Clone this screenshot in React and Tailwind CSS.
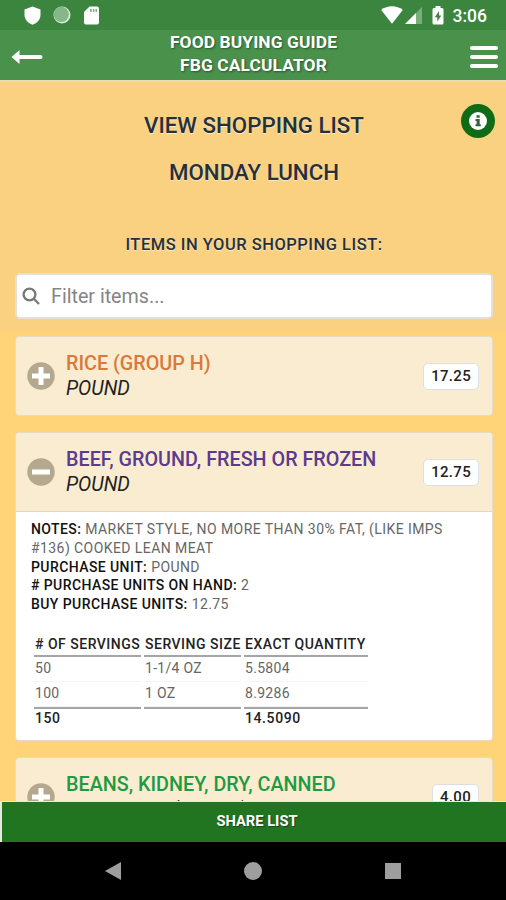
import React, { useState } from 'react';
import clsx from 'clsx';

const items = [
  { id: 'rice', name: 'RICE (GROUP H)', unit: 'POUND', qty: '17.25', color: 'text-[#d9793c]' },
  {
    id: 'beef',
    name: 'BEEF, GROUND, FRESH OR FROZEN',
    unit: 'POUND',
    qty: '12.75',
    color: 'text-[#5c3a8e]',
    notes: 'MARKET STYLE, NO MORE THAN 30% FAT, (LIKE IMPS #136) COOKED LEAN MEAT',
    onHand: '2',
    servings: [
      ['50', '1-1/4 OZ', '5.5804'],
      ['100', '1 OZ', '8.9286'],
    ],
    total: ['150', '', '14.5090'],
  },
  { id: 'beans', name: 'BEANS, KIDNEY, DRY, CANNED', unit: 'NO. 10 CAN (108 OZ)', qty: '4.00', color: 'text-[#1f9a43]' },
];

function StatusBar() {
  return (
    <div className="flex h-[30px] shrink-0 items-center bg-[#3c853e] pl-[24px] pr-[19px] text-white">
      <svg className="h-[19px] w-[17px]" viewBox="0 0 17 19" fill="currentColor">
        <path d="M8.5 0.5 L16.5 3.5 V9 C16.5 13.500 13 17.500 8.500 18.700 C4 17.500 0.500 13.500 0.500 9 V3.500 Z" />
      </svg>
      <svg className="ml-[12px] h-[18px] w-[18px]" viewBox="0 0 18 18">
        <circle cx="9" cy="9" r="8.500" fill="#d8e9d6" />
        <circle cx="8.300" cy="8.300" r="7.600" fill="#86b788" />
      </svg>
      <svg className="ml-[13px] h-[19px] w-[15px]" viewBox="0 0 15 19">
        <path d="M5.500 0.500 H13 a2 2 0 0 1 2 2 V16.500 a2 2 0 0 1 -2 2 H2 a2 2 0 0 1 -2 -2 V6 Z" fill="#fff" />
        <path d="M6 3 h1.600 v3 H6z M8.800 3 h1.600 v3 H8.800z M11.500 3 h1.600 v3 h-1.600z" fill="#7fb081" />
      </svg>
      <svg className="ml-auto h-[18px] w-[22px]" viewBox="0 0 22 18" fill="currentColor">
        <path d="M11 17.700 L0.200 4 C6 -1 16 -1 21.800 4 Z" />
      </svg>
      <svg className="ml-[2px] h-[17px] w-[17px]" viewBox="0 0 17 17">
        <path d="M17 0 V17 H0 Z" fill="#79ad7a" />
        <path d="M11 6 V17 H0 Z" fill="#fff" />
      </svg>
      <svg className="ml-[10px] h-[19px] w-[12px]" viewBox="0 0 12 19">
        <path d="M3.500 0 h5 v2 h1.500 a1.500 1.500 0 0 1 1.500 1.500 V17 a1.500 1.500 0 0 1 -1.500 1.500 H2 A1.500 1.500 0 0 1 0.500 17 V3.500 A1.500 1.500 0 0 1 2 2 h1.500z" fill="#fff" />
        <path d="M7 5 L2.800 11.300 H5.300 V15.500 L9.300 9.400 H7z" fill="#3c853e" />
      </svg>
      <span className="ml-[9px] pt-[3px] text-[17.500px] font-medium leading-none">3:06</span>
    </div>
  );
}

function Header() {
  return (
    <header className="grid h-[52px] shrink-0 grid-cols-[60px_1fr_60px] items-center border-b-2 border-[#ecd9b4] bg-[#4a914c] text-white">
      <svg className="ml-[11px] mt-[4px] h-[16px] w-[32px]" viewBox="0 0 32 16" fill="currentColor">
        <path d="M0.500 8 L8.500 1 V6 H29.500 a2 2 0 0 1 0 4 H8.500 V15 Z" />
      </svg>
      <h1 className="pb-[2px] pl-[1px] text-center text-[17.400px] font-bold leading-[23px] tracking-[0.100px] [text-shadow:1px_1px_2px_rgba(30,60,30,0.7)]">
        FOOD BUYING GUIDE
        <br />
        FBG CALCULATOR
      </h1>
      <button aria-label="Menu" className="ml-[24px] mt-[4px] flex w-[28px] flex-col gap-[4.500px]">
        <span className="h-[4.500px] rounded-[2px] bg-white" />
        <span className="h-[4.500px] rounded-[2px] bg-white" />
        <span className="h-[4.500px] rounded-[2px] bg-white" />
      </button>
    </header>
  );
}

function ToggleIcon({ open }) {
  return (
    <svg className="h-[28px] w-[28px] shrink-0" viewBox="0 0 28 28">
      <circle cx="14" cy="14" r="13.700" fill="#b4a98f" />
      <path d={open ? 'M5 11.500h18v5H5z' : 'M5 11.500h6.500V5h5v6.500H23v5h-6.500V23h-5v-6.500H5z'} fill="#fff" />
    </svg>
  );
}

function ServingsTable({ rows, total }) {
  const cell = 'pl-[1px] text-left';
  return (
    <table className="mt-[20px] w-[340px] table-fixed border-separate border-spacing-x-[3px] border-spacing-y-0">
      <colgroup>
        <col className="w-[107px]" />
        <col className="w-[97px]" />
        <col />
      </colgroup>
      <thead>
        <tr className="h-[23px] whitespace-nowrap text-[14px] font-medium text-[#222]">
          {['# OF SERVINGS', 'SERVING SIZE', 'EXACT QUANTITY'].map(h => (
            <th key={h} className={clsx(cell, 'border-b-2 border-[#a5a5a5] font-medium leading-[20px] tracking-[0.500px]')}>{h}</th>
          ))}
        </tr>
      </thead>
      <tbody>
        {rows.map((row, i) => (
          <tr key={i} className="h-[25px] text-[14px] leading-[20px] tracking-[0.300px] text-[#666]">
            {row.map((v, j) => (
              <td key={j} className={clsx(cell, 'border-b border-[#f5f5f5] pb-[1px]')}>{v}</td>
            ))}
          </tr>
        ))}
        <tr className="h-[23px] text-[14px] font-medium leading-[17px] tracking-[0.600px] text-[#222]">
          {total.map((v, j) => (
            <td key={j} className={clsx(cell, 'border-t-2 border-[#a5a5a5] pb-[2px]')}>{v}</td>
          ))}
        </tr>
      </tbody>
    </table>
  );
}

function ItemCard({ item, open, onToggle }) {
  return (
    <div className="w-[478px] shrink-0 overflow-hidden rounded-[4px] border border-[#e3dccb] bg-white">
      <div
        onClick={onToggle}
        className={clsx('flex items-center bg-[#f9ecd1] pl-[11px] pr-[13px]', open ? 'h-[79px] border-b border-[#ddd9cb]' : 'h-[78px]')}
      >
        <ToggleIcon open={open} />
        <div className="ml-[11px] text-[19.750px] leading-[25px]">
          <div className={clsx('whitespace-nowrap font-medium', item.color)}>{item.name}</div>
          <div className="italic text-[#222]">{item.unit}</div>
        </div>
        <span className="ml-auto flex h-[27px] items-center rounded-[5px] border border-[#dedede] bg-white px-[7px] text-[15px] font-medium tracking-[0.300px] text-[#222]">
          {item.qty}
        </span>
      </div>
      {open && item.servings && (
        <div className="h-[228px] px-[15px] pt-[8px] text-[14px] leading-[18.750px] tracking-[0.420px] text-[#666]">
          <p className="w-[430px]"><b className="font-medium text-[#111]">NOTES:</b> {item.notes}</p>
          <p><b className="font-medium text-[#111]">PURCHASE UNIT:</b> {item.unit}</p>
          <p><b className="font-medium text-[#111]"># PURCHASE UNITS ON HAND:</b> {item.onHand}</p>
          <p><b className="font-medium text-[#111]">BUY PURCHASE UNITS:</b> {item.qty}</p>
          <ServingsTable rows={item.servings} total={item.total} />
        </div>
      )}
    </div>
  );
}

export default function App() {
  const [openId, setOpenId] = useState('beef');
  const [filter, setFilter] = useState('');
  const shown = items.filter(i => i.name.includes(filter.toUpperCase()));

  return (
    <div className="flex h-[900px] w-[506px] flex-col overflow-hidden bg-black font-['Roboto',sans-serif]">
      <StatusBar />
      <Header />
      <main className="flex min-h-0 flex-1 flex-col overflow-hidden bg-[#ffd378]">
        <section className="relative h-[249px] shrink-0 bg-[#fad181] px-[15px] text-center text-[#25303a]">
          <h2 className="pl-[2px] pt-[30px] text-[22.300px] font-medium leading-[26px] [text-shadow:0_1px_1px_rgba(255,255,255,0.6)]">VIEW SHOPPING LIST</h2>
          <h2 className="pl-[2px] pt-[21px] text-[22.300px] font-medium leading-[26px] [text-shadow:0_1px_1px_rgba(255,255,255,0.6)]">MONDAY LUNCH</h2>
          <h3 className="pl-[2px] pt-[50px] text-[16.500px] font-medium leading-[20px] tracking-[0.500px] [text-shadow:0_1px_1px_rgba(255,255,255,0.6)]">ITEMS IN YOUR SHOPPING LIST:</h3>
          <label className="mt-[18px] flex h-[46px] w-[478px] items-center rounded-[5px] border-2 border-[#e4e0d8] bg-white pl-[5px]">
            <svg className="h-[18px] w-[18px]" viewBox="0 0 18 18" fill="none" stroke="#777" strokeWidth="2.300">
              <circle cx="7.500" cy="7.500" r="5.900" />
              <path d="M11.800 11.800 L17 17" />
            </svg>
            <input
              value={filter}
              onChange={e => setFilter(e.target.value)}
              placeholder="Filter items..."
              className="ml-[11px] w-[400px] pt-[1px] text-[19.700px] text-[#333] outline-none placeholder:text-[#858585]"
            />
          </label>
          <button aria-label="Info" className="absolute right-[11px] top-[22px] flex h-[34px] w-[34px] items-center justify-center rounded-full bg-[#0f6b16]">
            <svg className="h-[18px] w-[18px]" viewBox="0 0 18 18">
              <circle cx="9" cy="9" r="9" fill="#fff" />
              <path d="M7.500 3.200h3.200v2.600H7.500z M6.500 7h4.200v5.200h1.100v2H6.500v-2h1.100V9H6.500z" fill="#35633a" />
            </svg>
          </button>
        </section>
        <div className="flex flex-col gap-[16px] pl-[15px] pt-[5px]">
          {shown.map(item => (
            <ItemCard
              key={item.id}
              item={item}
              open={openId === item.id}
              onToggle={() => setOpenId(openId === item.id ? null : item.id)}
            />
          ))}
        </div>
      </main>
      <button className="h-[41px] shrink-0 border-l-2 border-t border-[#e6eadf] bg-[#217521] pb-[2px] pl-[6px] text-[14.700px] font-bold text-white [text-shadow:1px_1px_1px_rgba(0,0,0,0.4)]">
        SHARE LIST
      </button>
      <nav className="grid h-[58px] shrink-0 grid-cols-3 items-center bg-black pl-[43px] pr-[43px]">
        <svg className="mx-auto h-[18px] w-[16px]" viewBox="0 0 16 18"><path d="M0 9 L16 0 V18z" fill="#9e9e9e" /></svg>
        <span className="mx-auto h-[18px] w-[18px] rounded-full bg-[#9e9e9e]" />
        <span className="mx-auto h-[16px] w-[16px] bg-[#9e9e9e]" />
      </nav>
    </div>
  );
}
